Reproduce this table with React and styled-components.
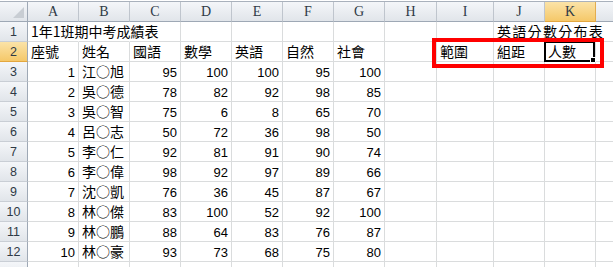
import React from "react";
import styled, { createGlobalStyle, css } from "styled-components";

const Global = createGlobalStyle`
  html, body { margin: 0; padding: 0; background: #ffffff; }
  body { width: 613px; height: 267px; overflow: hidden; }
`;

const LETTERS = ["A", "B", "C", "D", "E", "F", "G", "H", "I", "J", "K", "L"];

const data = [
  ["1年1班期中考成績表", "", "", "", "", "", "", "", "", "英語分數分布表", "", ""],
  ["座號", "姓名", "國語", "數學", "英語", "自然", "社會", "", "範圍", "組距", "人數", ""],
  [1, "江○旭", 95, 100, 100, 95, 100],
  [2, "吳○德", 78, 82, 92, 98, 85],
  [3, "吳○智", 75, 6, 8, 65, 70],
  [4, "呂○志", 50, 72, 36, 98, 50],
  [5, "李○仁", 92, 81, 91, 90, 74],
  [6, "李○偉", 98, 92, 97, 89, 66],
  [7, "沈○凱", 76, 36, 45, 87, 67],
  [8, "林○傑", 83, 100, 52, 92, 100],
  [9, "林○鵬", 88, 64, 83, 76, 87],
  [10, "林○豪", 93, 73, 68, 75, 80],
];

const OPEN = new Set(["0-0", "0-1", "0-9", "0-10"]);
const ACTIVE_ROW = 1;
const ACTIVE_COL = 10;

const Frame = styled.div`
  position: relative;
  width: 613px;
  height: 267px;
  overflow: hidden;
  padding-top: 1px;
  box-sizing: border-box;
`;

const Sheet = styled.div`
  display: grid;
  grid-template-columns: 28px 51px 51px 51px 51px 51px 51px 51px 52px 57px 51px 51px 40px;
  grid-auto-rows: 20px;
  border-top: 1px solid #a9b1bc;
  width: 641px;
`;

const headerBg = css`
  background: linear-gradient(#f4f6f9, #e1e5ea);
`;
const activeBg = css`
  background: linear-gradient(#fbe3a8, #f5c869);
`;

const Corner = styled.div`
  box-sizing: border-box;
  ${headerBg};
  border-right: 1px solid #9ea8b5;
  border-bottom: 1px solid #9ea8b5;
  display: flex;
  align-items: flex-end;
  justify-content: flex-end;
  padding: 0 3px 3px 0;
`;

const ColHeader = styled.div`
  box-sizing: border-box;
  ${(p) => (p.$active ? activeBg : headerBg)};
  border-right: 1px solid ${(p) => (p.$active ? "#e3ad4f" : "#bfc5cd")};
  border-bottom: 1px solid ${(p) => (p.$active ? "#e3a73f" : "#9ea8b5")};
  font-family: "Liberation Serif", serif;
  font-size: 14px;
  line-height: 19px;
  color: #2f3a46;
  text-align: center;
`;

const RowHeader = styled.div`
  box-sizing: border-box;
  ${(p) => (p.$active ? activeBg : headerBg)};
  border-right: 1px solid #9ea8b5;
  border-bottom: 1px solid ${(p) => (p.$active ? "#e3a73f" : "#c9ced5")};
  font-family: "Liberation Sans", sans-serif;
  font-size: 12.5px;
  line-height: 19px;
  padding-top: 1px;
  color: #2f3a46;
  text-align: center;
`;

const Cell = styled.div`
  box-sizing: border-box;
  position: relative;
  border-right: 1px solid ${(p) => (p.$open ? "transparent" : "#dadcdd")};
  border-bottom: 1px solid #dadcdd;
  padding: 0 3px;
  white-space: nowrap;
  color: #000;
  ${(p) =>
    p.$num
      ? css`
          font-family: "Liberation Sans", sans-serif;
          font-size: 13px;
          line-height: 19px;
          padding-top: 1px;
          text-align: right;
        `
      : css`
          font-family: "Noto Sans CJK TC", "Liberation Sans", sans-serif;
          font-size: 14px;
          line-height: 19px;
          text-align: left;
          letter-spacing: ${p.$spaced ? "1.3px" : "0"};
        `}
`;

const ActiveBox = styled.div`
  position: absolute;
  left: -1px;
  top: -1px;
  right: 0;
  bottom: -1px;
  border: 2px solid #000;
  pointer-events: none;
`;

const FillHandle = styled.div`
  position: absolute;
  right: -3px;
  bottom: -3px;
  width: 6px;
  height: 6px;
  box-sizing: border-box;
  background: #000;
  border: 1px solid #fff;
`;

const Highlight = styled.div`
  position: absolute;
  left: 432px;
  top: 38px;
  width: 172px;
  height: 30px;
  box-sizing: border-box;
  border: 4px solid #ff0000;
  z-index: 5;
  pointer-events: none;
`;

function CornerIcon() {
  return (
    <svg width="11" height="11" viewBox="0 0 11 11">
      <polygon points="11,0 11,11 0,11" fill="#c8cdd3" />
    </svg>
  );
}

export default function App() {
  const rows = [...data, []];
  return (
    <>
      <Global />
      <Frame>
        <Sheet>
          <Corner>
            <CornerIcon />
          </Corner>
          {LETTERS.map((l, i) => (
            <ColHeader key={l} $active={i === ACTIVE_COL}>
              {l === "L" ? "" : l}
            </ColHeader>
          ))}
          {rows.map((row, r) => (
            <React.Fragment key={r}>
              <RowHeader $active={r === ACTIVE_ROW}>
                {r < data.length ? r + 1 : null}
              </RowHeader>
              {LETTERS.map((_, c) => {
                const v = row[c];
                const isNum = typeof v === "number";
                const active = r === ACTIVE_ROW && c === ACTIVE_COL;
                return (
                  <Cell
                    key={c}
                    $num={isNum}
                    $open={OPEN.has(`${r}-${c}`)}
                    $spaced={r === 0 && c === 9}
                  >
                    {v === undefined || v === "" ? null : v}
                    {active && (
                      <ActiveBox>
                        <FillHandle />
                      </ActiveBox>
                    )}
                  </Cell>
                );
              })}
            </React.Fragment>
          ))}
        </Sheet>
        <Highlight />
      </Frame>
    </>
  );
}
